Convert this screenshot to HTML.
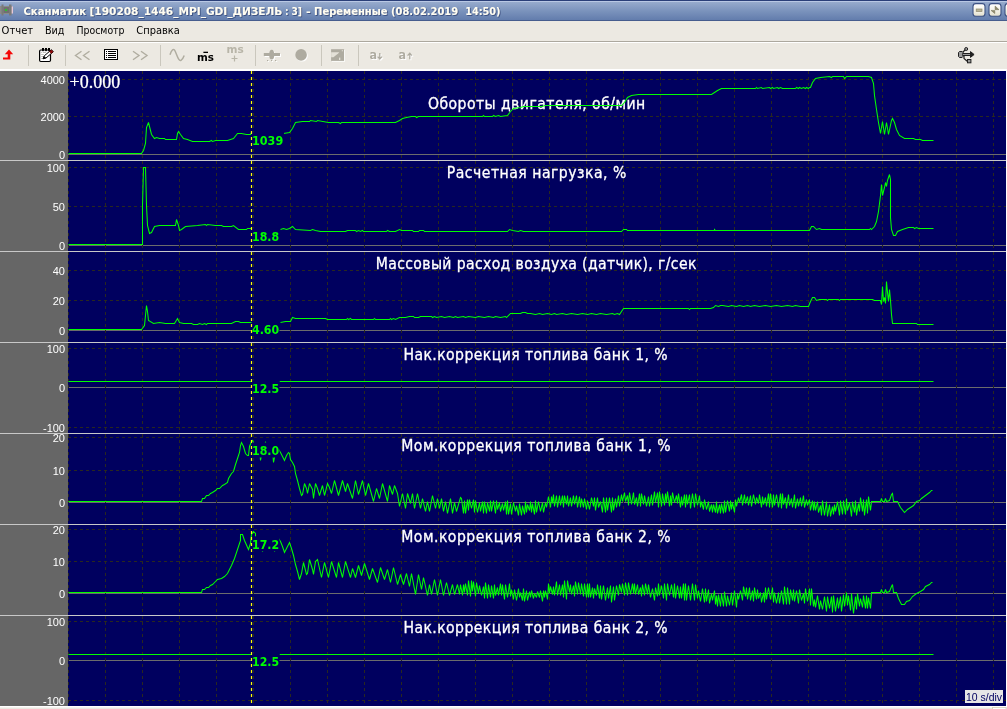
<!DOCTYPE html>
<html lang="ru"><head><meta charset="utf-8"><title>Сканматик</title>
<style>html,body{margin:0;padding:0;background:#ece9e2;overflow:hidden}body{width:1007px;height:709px;position:relative}svg text{white-space:pre}</style></head>
<body>
<svg width="1007" height="709" viewBox="0 0 1007 709" style="position:absolute;left:0;top:0;will-change:transform">
<defs><linearGradient id="tb" x1="0" y1="0" x2="0" y2="1"><stop offset="0" stop-color="#9db0d0"/><stop offset="0.5" stop-color="#7c94bd"/><stop offset="1" stop-color="#607aab"/></linearGradient></defs>
<rect x="0" y="71" width="68" height="635" fill="#666666"/>
<rect x="68" y="71" width="938" height="635" fill="#00005f"/>
<g stroke="#6c6c6c" stroke-width="1" shape-rendering="crispEdges">
<line x1="68" y1="154.5" x2="1006" y2="154.5"/>
<line x1="68" y1="245.5" x2="1006" y2="245.5"/>
<line x1="68" y1="330.5" x2="1006" y2="330.5"/>
<line x1="68" y1="387.5" x2="1006" y2="387.5"/>
<line x1="68" y1="502.5" x2="1006" y2="502.5"/>
<line x1="68" y1="593.5" x2="1006" y2="593.5"/>
<line x1="68" y1="660.5" x2="1006" y2="660.5"/>
</g>
<g stroke="#29281f" stroke-width="1" stroke-dasharray="3 3" shape-rendering="crispEdges">
<path d="M68.5 71V160M105.5 71V160M142.5 71V160M179.5 71V160M216.5 71V160M253.5 71V160M290.5 71V160M327.5 71V160M364.5 71V160M401.5 71V160M438.5 71V160M475.5 71V160M512.5 71V160M549.5 71V160M586.5 71V160M623.5 71V160M660.5 71V160M697.5 71V160M734.5 71V160M771.5 71V160M808.5 71V160M845.5 71V160M882.5 71V160M919.5 71V160M956.5 71V160M993.5 71V160" fill="none"/>
<path d="M68.5 161V251M105.5 161V251M142.5 161V251M179.5 161V251M216.5 161V251M253.5 161V251M290.5 161V251M327.5 161V251M364.5 161V251M401.5 161V251M438.5 161V251M475.5 161V251M512.5 161V251M549.5 161V251M586.5 161V251M623.5 161V251M660.5 161V251M697.5 161V251M734.5 161V251M771.5 161V251M808.5 161V251M845.5 161V251M882.5 161V251M919.5 161V251M956.5 161V251M993.5 161V251" fill="none"/>
<path d="M68.5 252V342M105.5 252V342M142.5 252V342M179.5 252V342M216.5 252V342M253.5 252V342M290.5 252V342M327.5 252V342M364.5 252V342M401.5 252V342M438.5 252V342M475.5 252V342M512.5 252V342M549.5 252V342M586.5 252V342M623.5 252V342M660.5 252V342M697.5 252V342M734.5 252V342M771.5 252V342M808.5 252V342M845.5 252V342M882.5 252V342M919.5 252V342M956.5 252V342M993.5 252V342" fill="none"/>
<path d="M68.5 343V433M105.5 343V433M142.5 343V433M179.5 343V433M216.5 343V433M253.5 343V433M290.5 343V433M327.5 343V433M364.5 343V433M401.5 343V433M438.5 343V433M475.5 343V433M512.5 343V433M549.5 343V433M586.5 343V433M623.5 343V433M660.5 343V433M697.5 343V433M734.5 343V433M771.5 343V433M808.5 343V433M845.5 343V433M882.5 343V433M919.5 343V433M956.5 343V433M993.5 343V433" fill="none"/>
<path d="M68.5 434V524M105.5 434V524M142.5 434V524M179.5 434V524M216.5 434V524M253.5 434V524M290.5 434V524M327.5 434V524M364.5 434V524M401.5 434V524M438.5 434V524M475.5 434V524M512.5 434V524M549.5 434V524M586.5 434V524M623.5 434V524M660.5 434V524M697.5 434V524M734.5 434V524M771.5 434V524M808.5 434V524M845.5 434V524M882.5 434V524M919.5 434V524M956.5 434V524M993.5 434V524" fill="none"/>
<path d="M68.5 525V615M105.5 525V615M142.5 525V615M179.5 525V615M216.5 525V615M253.5 525V615M290.5 525V615M327.5 525V615M364.5 525V615M401.5 525V615M438.5 525V615M475.5 525V615M512.5 525V615M549.5 525V615M586.5 525V615M623.5 525V615M660.5 525V615M697.5 525V615M734.5 525V615M771.5 525V615M808.5 525V615M845.5 525V615M882.5 525V615M919.5 525V615M956.5 525V615M993.5 525V615" fill="none"/>
<path d="M68.5 616V706M105.5 616V706M142.5 616V706M179.5 616V706M216.5 616V706M253.5 616V706M290.5 616V706M327.5 616V706M364.5 616V706M401.5 616V706M438.5 616V706M475.5 616V706M512.5 616V706M549.5 616V706M586.5 616V706M623.5 616V706M660.5 616V706M697.5 616V706M734.5 616V706M771.5 616V706M808.5 616V706M845.5 616V706M882.5 616V706M919.5 616V706M956.5 616V706M993.5 616V706" fill="none"/>
<line x1="68" y1="79.5" x2="1006" y2="79.5"/>
<line x1="68" y1="116.5" x2="1006" y2="116.5"/>
<line x1="68" y1="167.5" x2="1006" y2="167.5"/>
<line x1="68" y1="206.5" x2="1006" y2="206.5"/>
<line x1="68" y1="270.5" x2="1006" y2="270.5"/>
<line x1="68" y1="300.5" x2="1006" y2="300.5"/>
<line x1="68" y1="348.5" x2="1006" y2="348.5"/>
<line x1="68" y1="427.5" x2="1006" y2="427.5"/>
<line x1="68" y1="437.5" x2="1006" y2="437.5"/>
<line x1="68" y1="470.5" x2="1006" y2="470.5"/>
<line x1="68" y1="529.5" x2="1006" y2="529.5"/>
<line x1="68" y1="561.5" x2="1006" y2="561.5"/>
<line x1="68" y1="621.5" x2="1006" y2="621.5"/>
<line x1="68" y1="700.5" x2="1006" y2="700.5"/>
</g>
<g font-family="'DejaVu Sans Condensed','DejaVu Sans','Liberation Sans',sans-serif" font-size="15.6" fill="#ffffff" stroke="#ffffff" stroke-width="0.3">
<text x="427.9" y="108.7" textLength="217.3" lengthAdjust="spacing">Обороты двигателя, об/мин</text>
<text x="446.8" y="177.9" textLength="179.5" lengthAdjust="spacing">Расчетная нагрузка, %</text>
<text x="375.7" y="268.9" textLength="320.7" lengthAdjust="spacing">Массовый расход воздуха (датчик), г/сек</text>
<text x="403.4" y="360" textLength="264.2" lengthAdjust="spacing">Нак.коррекция топлива банк 1, %</text>
<text x="401.3" y="450.9" textLength="269.3" lengthAdjust="spacing">Мом.коррекция топлива банк 1, %</text>
<text x="401.3" y="541.9" textLength="269.3" lengthAdjust="spacing">Мом.коррекция топлива банк 2, %</text>
<text x="403.4" y="632.9" textLength="264.2" lengthAdjust="spacing">Нак.коррекция топлива банк 2, %</text>
</g>
<g fill="none" stroke="#00ff00" stroke-width="1.05" stroke-linejoin="miter" stroke-miterlimit="3">
<polyline points="68.5,153.5 141.5,153.5 143.5,150.5 145.5,143.5 146.5,127.5 148.5,122.5 149.5,126.5 151.5,134.5 154.5,138.5 156.5,137.5 159.5,138.5 164.5,138.5 165.5,139.5 171.5,139.5 176.5,139.5 177.5,133.5 178.5,131.5 180.5,134.5 183.5,138.5 187.5,139.5 192.5,141.5 209.5,141.5 211.5,140.5 212.5,141.5 215.5,140.5 227.5,140.5 233.5,138.5 237.5,133.5 241.5,133.5 246.5,134.5 250.5,134.5 251.5,132.5"/><polyline points="283.5,133.5 289.5,132.5 292.5,128.5 295.5,122.5 302.5,121.5 309.5,121.5 310.5,120.5 316.5,121.5 317.5,120.5 328.5,122.5 330.5,122.5 338.5,122.5 340.5,123.5 341.5,122.5 395.5,122.5 399.5,120.5 402.5,118.5 406.5,117.5 411.5,116.5 415.5,116.5 416.5,117.5 418.5,116.5 482.5,116.5 483.5,115.5 484.5,116.5 492.5,116.5 493.5,115.5 495.5,116.5 498.5,115.5 500.5,116.5 507.5,115.5 510.5,111.5 513.5,108.5 520.5,107.5 523.5,106.5 541.5,106.5 545.5,105.5 621.5,105.5 624.5,102.5 627.5,97.5 631.5,95.5 638.5,94.5 640.5,94.5 711.5,94.5 714.5,92.5 717.5,90.5 721.5,88.5 730.5,88.5 755.5,88.5 756.5,87.5 757.5,88.5 761.5,87.5 762.5,88.5 769.5,87.5 770.5,88.5 772.5,87.5 773.5,88.5 777.5,87.5 778.5,88.5 780.5,87.5 782.5,88.5 795.5,88.5 796.5,87.5 798.5,88.5 799.5,87.5 801.5,88.5 803.5,87.5 805.5,88.5 806.5,87.5 808.5,88.5 809.5,87.5 810.5,87.5 812.5,82.5 815.5,78.5 820.5,77.5 829.5,76.5 831.5,77.5 832.5,76.5 843.5,76.5 844.5,78.5 846.5,76.5 868.5,76.5 871.5,77.5 873.5,83.5 874.5,95.5 876.5,109.5 878.5,122.5 880.5,133.5 882.5,121.5 884.5,134.5 886.5,122.5 888.5,134.5 891.5,120.5 892.5,118.5 894.5,122.5 896.5,129.5 899.5,135.5 904.5,138.5 913.5,138.5 915.5,139.5 920.5,139.5 922.5,140.5 933.5,140.5"/>
<polyline points="68.5,244.5 142.5,244.5 142.5,205.5 143.5,167.5 145.5,167.5 146.5,205.5 147.5,225.5 149.5,233.5 151.5,232.5 154.5,226.5 159.5,225.5 175.5,225.5 176.5,219.5 178.5,225.5 179.5,230.5 181.5,229.5 185.5,226.5 197.5,225.5 205.5,224.5 206.5,225.5 207.5,224.5 215.5,225.5 221.5,225.5 223.5,226.5 231.5,226.5 233.5,225.5 238.5,229.5 246.5,229.5 247.5,228.5 251.5,228.5"/><polyline points="280.5,229.5 283.5,228.5 286.5,229.5 289.5,228.5 292.5,226.5 295.5,229.5 310.5,230.5 312.5,229.5 315.5,230.5 320.5,231.5 345.5,231.5 347.5,230.5 355.5,230.5 356.5,231.5 358.5,230.5 360.5,231.5 362.5,230.5 363.5,231.5 386.5,231.5 387.5,230.5 389.5,231.5 395.5,231.5 399.5,229.5 401.5,230.5 404.5,230.5 412.5,230.5 413.5,231.5 418.5,231.5 419.5,230.5 423.5,230.5 424.5,231.5 507.5,231.5 509.5,229.5 512.5,230.5 518.5,231.5 520.5,230.5 523.5,231.5 621.5,231.5 623.5,229.5 626.5,229.5 627.5,230.5 714.5,230.5 714.5,229.5 715.5,230.5 809.5,230.5 811.5,226.5 813.5,226.5 816.5,229.5 819.5,228.5 821.5,229.5 869.5,229.5 870.5,228.5 871.5,229.5 874.5,226.5 876.5,221.5 878.5,211.5 880.5,195.5 881.5,184.5 882.5,195.5 884.5,187.5 885.5,182.5 886.5,186.5 887.5,180.5 889.5,174.5 890.5,179.5 890.5,217.5 891.5,229.5 893.5,235.5 895.5,235.5 897.5,231.5 902.5,229.5 908.5,227.5 913.5,227.5 914.5,228.5 916.5,227.5 918.5,228.5 933.5,228.5"/>
<polyline points="68.5,329.5 141.5,329.5 144.5,325.5 145.5,315.5 146.5,305.5 147.5,311.5 148.5,320.5 153.5,323.5 159.5,322.5 165.5,323.5 174.5,323.5 177.5,318.5 179.5,322.5 183.5,323.5 191.5,323.5 193.5,324.5 197.5,324.5 199.5,323.5 202.5,324.5 204.5,323.5 206.5,324.5 207.5,323.5 231.5,323.5 235.5,321.5 238.5,321.5 240.5,322.5 251.5,322.5"/><polyline points="280.5,322.5 285.5,321.5 290.5,321.5 292.5,317.5 295.5,318.5 325.5,318.5 327.5,319.5 330.5,319.5 346.5,319.5 347.5,318.5 348.5,319.5 350.5,318.5 351.5,319.5 373.5,319.5 374.5,318.5 375.5,319.5 389.5,319.5 390.5,318.5 391.5,319.5 393.5,318.5 395.5,319.5 399.5,317.5 405.5,317.5 409.5,316.5 413.5,316.5 414.5,317.5 418.5,317.5 420.5,316.5 431.5,316.5 432.5,317.5 434.5,316.5 436.5,317.5 441.5,316.5 444.5,317.5 449.5,316.5 453.5,317.5 455.5,316.5 457.5,317.5 463.5,316.5 465.5,317.5 468.5,316.5 475.5,317.5 478.5,316.5 484.5,317.5 488.5,316.5 493.5,317.5 495.5,316.5 500.5,317.5 505.5,316.5 506.5,317.5 510.5,313.5 520.5,313.5 522.5,312.5 525.5,312.5 527.5,313.5 530.5,313.5 535.5,314.5 539.5,313.5 542.5,314.5 547.5,313.5 551.5,314.5 554.5,313.5 556.5,314.5 562.5,313.5 566.5,314.5 571.5,313.5 577.5,314.5 582.5,313.5 587.5,314.5 591.5,313.5 596.5,314.5 600.5,313.5 606.5,314.5 612.5,313.5 614.5,314.5 617.5,313.5 619.5,314.5 623.5,308.5 688.5,308.5 689.5,309.5 690.5,308.5 710.5,308.5 713.5,307.5 715.5,305.5 718.5,306.5 720.5,305.5 722.5,305.5 728.5,306.5 731.5,305.5 736.5,306.5 739.5,305.5 743.5,306.5 747.5,305.5 750.5,306.5 754.5,305.5 759.5,306.5 765.5,305.5 770.5,306.5 776.5,305.5 781.5,306.5 787.5,305.5 792.5,306.5 795.5,305.5 800.5,306.5 808.5,306.5 810.5,301.5 812.5,297.5 814.5,297.5 816.5,300.5 819.5,299.5 826.5,299.5 827.5,300.5 828.5,299.5 838.5,299.5 839.5,300.5 840.5,299.5 872.5,299.5 874.5,300.5 880.5,300.5 881.5,304.5 882.5,286.5 883.5,301.5 884.5,297.5 885.5,303.5 886.5,281.5 887.5,292.5 888.5,301.5 889.5,289.5 890.5,300.5 891.5,314.5 892.5,323.5 916.5,323.5 917.5,324.5 933.5,324.5"/>
<polyline points="68.5,381.5 252.5,381.5"/><polyline points="279.5,381.5 933.5,381.5"/>
<polyline points="68.5,501.5 201.5,501.5 202.5,498.5 204.5,498.5 206.5,495.5 208.5,495.5 210.5,493.5 212.5,492.5 215.5,490.5 217.5,488.5 219.5,488.5 222.5,485.5 224.5,484.5 227.5,482.5 228.5,478.5 231.5,473.5 233.5,471.5 235.5,464.5 237.5,458.5 239.5,452.5 240.5,445.5 241.5,442.5 243.5,446.5 245.5,453.5 247.5,455.5 248.5,455.5 249.5,446.5 251.5,441.5 252.5,440.5 253.5,442.5 255.5,449.5 257.5,455.5 259.5,447.5 260.5,460.5 262.5,449.5 265.5,442.5 268.5,450.5 270.5,456.5 272.5,449.5 273.5,462.5 275.5,452.5 277.5,447.5 280.5,452.5 282.5,456.5 284.5,460.5 286.5,455.5 288.5,452.5 289.5,453.5 290.5,459.5 292.5,462.5 294.5,466.5 295.5,473.5 297.5,480.5 299.5,488.5 301.5,495.5 302.5,494.5 304.5,483.5 306.5,488.5 307.5,493.5 309.5,483.5 312.5,489.5 313.5,498.5 315.5,483.5 317.5,488.5 319.5,495.5 322.5,485.5 324.5,495.5 327.5,483.5 329.5,487.5 331.5,493.5 334.5,480.5 338.5,495.5 342.5,480.5 345.5,491.5 347.5,483.5 352.5,498.5 355.5,480.5 358.5,494.5 362.5,480.5 365.5,495.5 368.5,483.5 373.5,501.5 376.5,488.5 379.5,498.5 382.5,483.5 387.5,501.5 389.5,485.5 392.5,494.5 394.5,485.5 397.5,493.5 399.5,506.5 402.5,493.5 405.5,508.5 407.5,493.5 410.5,503.5 412.5,493.5 414.5,508.5 417.5,493.5 420.5,508.5 422.5,498.5 425.5,511.5 427.5,501.5 429.5,511.5 432.5,495.5 435.5,508.5 437.5,498.5 439.5,508.5 441.5,498.5 443.5,511.5 445.5,501.5 447.5,513.5 450.5,498.5 452.5,513.5 454.5,502.5 456.5,511.5 460.5,497.5 461.5,498.5 463.5,513.5 464.5,500.5 465.5,513.5 467.5,499.5 468.5,510.5 469.5,499.5 471.5,508.5 473.5,499.5 474.5,512.5 475.5,500.5 477.5,512.5 479.5,502.5 480.5,511.5 482.5,501.5 483.5,513.5 484.5,501.5 486.5,513.5 487.5,502.5 489.5,511.5 490.5,500.5 491.5,511.5 493.5,500.5 495.5,513.5 496.5,500.5 497.5,509.5 499.5,502.5 500.5,511.5 502.5,503.5 503.5,510.5 505.5,501.5 506.5,514.5 507.5,500.5 508.5,514.5 510.5,503.5 511.5,514.5 513.5,502.5 515.5,511.5 516.5,505.5 518.5,515.5 519.5,503.5 521.5,515.5 522.5,505.5 524.5,514.5 525.5,501.5 526.5,512.5 527.5,504.5 529.5,510.5 530.5,501.5 531.5,512.5 532.5,503.5 534.5,514.5 535.5,500.5 536.5,512.5 538.5,501.5 540.5,511.5 542.5,502.5 543.5,512.5 545.5,502.5 546.5,507.5 548.5,496.5 550.5,507.5 551.5,496.5 552.5,503.5 553.5,494.5 554.5,506.5 556.5,495.5 557.5,507.5 559.5,495.5 560.5,505.5 562.5,495.5 563.5,507.5 564.5,495.5 566.5,504.5 567.5,495.5 568.5,506.5 570.5,497.5 571.5,506.5 573.5,495.5 574.5,504.5 576.5,495.5 577.5,507.5 579.5,496.5 580.5,507.5 581.5,498.5 583.5,507.5 584.5,498.5 586.5,509.5 587.5,500.5 589.5,509.5 591.5,497.5 593.5,506.5 594.5,497.5 595.5,510.5 597.5,497.5 598.5,507.5 600.5,501.5 602.5,512.5 603.5,497.5 605.5,512.5 606.5,497.5 607.5,510.5 609.5,497.5 611.5,512.5 612.5,497.5 613.5,510.5 615.5,498.5 616.5,507.5 618.5,495.5 619.5,506.5 621.5,494.5 622.5,501.5 624.5,492.5 625.5,501.5 627.5,495.5 628.5,505.5 629.5,492.5 631.5,504.5 633.5,492.5 634.5,504.5 636.5,497.5 637.5,506.5 639.5,493.5 640.5,506.5 641.5,493.5 643.5,504.5 644.5,495.5 646.5,506.5 648.5,496.5 649.5,506.5 651.5,494.5 652.5,505.5 654.5,491.5 655.5,502.5 657.5,492.5 658.5,507.5 659.5,491.5 661.5,506.5 662.5,493.5 664.5,505.5 665.5,493.5 666.5,502.5 667.5,491.5 669.5,506.5 670.5,495.5 671.5,505.5 672.5,492.5 674.5,502.5 676.5,495.5 677.5,503.5 678.5,493.5 680.5,507.5 681.5,496.5 682.5,505.5 684.5,494.5 685.5,507.5 686.5,494.5 687.5,504.5 689.5,494.5 690.5,508.5 692.5,493.5 694.5,507.5 695.5,493.5 697.5,505.5 699.5,495.5 700.5,507.5 701.5,501.5 703.5,509.5 704.5,499.5 706.5,509.5 708.5,501.5 709.5,511.5 711.5,504.5 712.5,512.5 713.5,504.5 715.5,512.5 716.5,501.5 717.5,513.5 719.5,504.5 720.5,513.5 721.5,503.5 723.5,513.5 724.5,500.5 725.5,512.5 727.5,500.5 729.5,511.5 730.5,500.5 731.5,509.5 732.5,502.5 734.5,512.5 735.5,499.5 736.5,506.5 738.5,497.5 739.5,502.5 741.5,494.5 742.5,505.5 744.5,494.5 745.5,503.5 747.5,496.5 748.5,505.5 750.5,495.5 751.5,506.5 753.5,494.5 755.5,504.5 756.5,497.5 758.5,503.5 759.5,494.5 761.5,507.5 762.5,496.5 763.5,504.5 765.5,497.5 766.5,506.5 768.5,493.5 769.5,507.5 770.5,493.5 772.5,507.5 773.5,494.5 774.5,505.5 776.5,494.5 778.5,507.5 780.5,493.5 781.5,508.5 782.5,493.5 783.5,504.5 785.5,497.5 786.5,508.5 788.5,494.5 789.5,505.5 791.5,498.5 792.5,507.5 794.5,494.5 795.5,508.5 797.5,498.5 798.5,506.5 800.5,497.5 801.5,506.5 803.5,495.5 804.5,507.5 806.5,499.5 807.5,505.5 809.5,499.5 810.5,510.5 812.5,500.5 813.5,510.5 814.5,501.5 815.5,510.5 817.5,501.5 818.5,512.5 820.5,505.5 821.5,515.5 822.5,500.5 824.5,515.5 826.5,501.5 827.5,516.5 829.5,504.5 830.5,516.5 832.5,506.5 833.5,514.5 834.5,504.5 835.5,511.5 837.5,501.5 839.5,515.5 840.5,500.5 842.5,514.5 843.5,500.5 845.5,514.5 846.5,498.5 847.5,510.5 849.5,502.5 851.5,516.5 852.5,501.5 854.5,512.5 855.5,500.5 856.5,515.5 858.5,503.5 859.5,511.5 860.5,497.5 862.5,511.5 863.5,499.5 864.5,515.5 866.5,499.5 867.5,513.5 868.5,496.5 870.5,510.5 871.5,501.5 880.5,501.5 881.5,498.5 882.5,501.5 884.5,501.5 885.5,498.5 886.5,501.5 889.5,500.5 891.5,494.5 892.5,493.5 893.5,501.5 897.5,501.5 900.5,507.5 904.5,512.5 907.5,509.5 913.5,505.5 916.5,501.5 919.5,500.5 921.5,498.5 925.5,495.5 929.5,492.5 931.5,490.5 932.5,490.5"/>
<polyline points="68.5,592.5 201.5,592.5 202.5,589.5 204.5,589.5 206.5,587.5 208.5,587.5 210.5,585.5 212.5,584.5 215.5,581.5 217.5,579.5 221.5,578.5 224.5,576.5 227.5,573.5 231.5,565.5 234.5,558.5 237.5,549.5 240.5,540.5 240.5,534.5 242.5,534.5 244.5,540.5 248.5,549.5 250.5,543.5 251.5,534.5 253.5,531.5 255.5,533.5 255.5,536.5 257.5,545.5 259.5,540.5 262.5,551.5 264.5,543.5 267.5,538.5 270.5,546.5 272.5,541.5 274.5,551.5 276.5,544.5 278.5,538.5 280.5,541.5 282.5,546.5 284.5,552.5 287.5,546.5 289.5,542.5 291.5,548.5 293.5,555.5 295.5,564.5 297.5,571.5 299.5,579.5 301.5,573.5 303.5,562.5 306.5,574.5 307.5,573.5 309.5,559.5 312.5,569.5 313.5,574.5 315.5,561.5 317.5,559.5 319.5,568.5 321.5,577.5 324.5,562.5 328.5,577.5 331.5,561.5 336.5,577.5 338.5,562.5 342.5,577.5 345.5,561.5 350.5,577.5 352.5,568.5 355.5,577.5 358.5,565.5 361.5,575.5 364.5,563.5 369.5,579.5 372.5,568.5 377.5,582.5 380.5,567.5 384.5,579.5 387.5,569.5 390.5,582.5 393.5,567.5 397.5,584.5 400.5,574.5 403.5,584.5 406.5,573.5 409.5,586.5 411.5,573.5 415.5,594.5 418.5,574.5 421.5,589.5 423.5,577.5 427.5,595.5 429.5,584.5 431.5,594.5 434.5,579.5 437.5,595.5 440.5,579.5 443.5,595.5 446.5,582.5 449.5,595.5 452.5,584.5 454.5,594.5 457.5,584.5 459.5,594.5 460.5,584.5 462.5,595.5 463.5,584.5 464.5,592.5 465.5,583.5 467.5,595.5 468.5,580.5 470.5,596.5 471.5,580.5 472.5,591.5 473.5,581.5 475.5,596.5 476.5,582.5 478.5,593.5 479.5,585.5 481.5,595.5 483.5,586.5 484.5,598.5 485.5,582.5 487.5,598.5 488.5,584.5 490.5,597.5 491.5,585.5 493.5,598.5 494.5,584.5 495.5,595.5 497.5,587.5 498.5,595.5 500.5,583.5 501.5,595.5 502.5,584.5 504.5,599.5 505.5,584.5 507.5,597.5 509.5,583.5 510.5,596.5 511.5,589.5 513.5,599.5 514.5,589.5 516.5,600.5 518.5,588.5 519.5,597.5 520.5,592.5 522.5,600.5 523.5,588.5 524.5,601.5 526.5,590.5 527.5,600.5 529.5,591.5 530.5,597.5 531.5,590.5 533.5,598.5 534.5,593.5 536.5,597.5 537.5,591.5 539.5,597.5 540.5,590.5 542.5,601.5 543.5,590.5 544.5,597.5 545.5,590.5 547.5,599.5 548.5,583.5 549.5,593.5 550.5,586.5 552.5,594.5 553.5,586.5 554.5,595.5 556.5,581.5 557.5,595.5 559.5,584.5 560.5,595.5 562.5,584.5 563.5,597.5 564.5,580.5 566.5,599.5 567.5,580.5 569.5,592.5 570.5,584.5 571.5,594.5 573.5,585.5 574.5,596.5 575.5,581.5 577.5,594.5 578.5,582.5 580.5,594.5 581.5,583.5 583.5,596.5 584.5,583.5 586.5,597.5 587.5,583.5 588.5,597.5 589.5,583.5 590.5,597.5 592.5,587.5 593.5,598.5 594.5,588.5 596.5,595.5 597.5,584.5 599.5,598.5 600.5,585.5 601.5,599.5 603.5,585.5 605.5,600.5 607.5,587.5 608.5,598.5 610.5,585.5 611.5,602.5 613.5,586.5 614.5,600.5 616.5,585.5 618.5,595.5 619.5,584.5 621.5,592.5 622.5,583.5 624.5,595.5 625.5,582.5 627.5,595.5 628.5,582.5 630.5,594.5 632.5,583.5 633.5,593.5 634.5,583.5 635.5,594.5 637.5,584.5 638.5,594.5 640.5,587.5 641.5,596.5 642.5,584.5 644.5,595.5 645.5,583.5 647.5,594.5 648.5,584.5 650.5,597.5 652.5,588.5 654.5,600.5 655.5,587.5 657.5,596.5 658.5,583.5 659.5,595.5 661.5,585.5 663.5,598.5 664.5,583.5 666.5,600.5 667.5,583.5 669.5,595.5 671.5,584.5 673.5,597.5 674.5,583.5 675.5,598.5 677.5,585.5 679.5,598.5 680.5,586.5 681.5,598.5 683.5,583.5 684.5,600.5 685.5,583.5 686.5,600.5 688.5,585.5 690.5,600.5 692.5,583.5 694.5,600.5 695.5,584.5 697.5,598.5 698.5,590.5 700.5,601.5 702.5,588.5 704.5,602.5 705.5,588.5 706.5,601.5 708.5,589.5 709.5,603.5 711.5,593.5 712.5,600.5 714.5,590.5 715.5,604.5 716.5,595.5 717.5,606.5 718.5,594.5 720.5,606.5 721.5,593.5 723.5,606.5 724.5,591.5 726.5,606.5 727.5,595.5 729.5,605.5 731.5,592.5 732.5,605.5 734.5,590.5 736.5,607.5 737.5,593.5 738.5,599.5 740.5,590.5 742.5,600.5 743.5,586.5 745.5,596.5 746.5,587.5 747.5,599.5 749.5,587.5 750.5,600.5 752.5,590.5 753.5,601.5 754.5,587.5 756.5,599.5 757.5,589.5 758.5,598.5 760.5,592.5 761.5,602.5 763.5,592.5 764.5,602.5 765.5,587.5 766.5,599.5 768.5,587.5 770.5,599.5 772.5,587.5 773.5,602.5 774.5,592.5 776.5,603.5 778.5,592.5 779.5,603.5 781.5,590.5 783.5,604.5 784.5,586.5 786.5,604.5 787.5,587.5 789.5,604.5 790.5,589.5 792.5,600.5 793.5,589.5 794.5,601.5 796.5,590.5 798.5,603.5 799.5,589.5 801.5,600.5 803.5,593.5 804.5,603.5 805.5,588.5 807.5,601.5 809.5,588.5 810.5,605.5 811.5,588.5 813.5,606.5 814.5,599.5 815.5,607.5 817.5,595.5 819.5,609.5 820.5,600.5 822.5,609.5 824.5,596.5 826.5,611.5 827.5,596.5 829.5,608.5 831.5,596.5 832.5,612.5 833.5,595.5 835.5,611.5 837.5,597.5 838.5,608.5 840.5,596.5 841.5,611.5 843.5,594.5 844.5,606.5 846.5,592.5 847.5,605.5 848.5,595.5 850.5,610.5 851.5,593.5 853.5,613.5 855.5,596.5 856.5,609.5 857.5,593.5 859.5,606.5 860.5,598.5 862.5,607.5 863.5,595.5 865.5,608.5 866.5,595.5 867.5,608.5 868.5,597.5 870.5,608.5 871.5,592.5 880.5,592.5 881.5,589.5 882.5,592.5 884.5,592.5 885.5,589.5 886.5,592.5 889.5,591.5 891.5,586.5 892.5,584.5 893.5,592.5 896.5,592.5 898.5,598.5 901.5,604.5 904.5,604.5 906.5,601.5 909.5,600.5 912.5,596.5 916.5,593.5 920.5,591.5 923.5,589.5 925.5,586.5 929.5,584.5 931.5,582.5 932.5,582.5"/>
<polyline points="68.5,654.5 252.5,654.5"/><polyline points="279.5,654.5 933.5,654.5"/>
</g>
<rect x="252" y="132.5" width="32" height="15" fill="#00005f"/>
<rect x="252" y="228.5" width="27.5" height="15" fill="#00005f"/>
<rect x="252" y="321.0" width="27.5" height="15" fill="#00005f"/>
<rect x="252" y="380.5" width="27.5" height="15" fill="#00005f"/>
<rect x="252" y="442.5" width="27.5" height="15" fill="#00005f"/>
<rect x="252" y="536.3" width="27.5" height="15" fill="#00005f"/>
<rect x="252" y="653.5" width="27.5" height="15" fill="#00005f"/>
<path d="M251.5 71V160M251.5 161V251M251.5 252V342M251.5 343V433M251.5 434V524M251.5 525V615M251.5 616V706" fill="none" stroke="#ffff00" stroke-width="1.2" stroke-dasharray="3 3"/>
<g stroke="#c8c8c8" stroke-width="1" shape-rendering="crispEdges">
<line x1="0" y1="160.5" x2="1006" y2="160.5"/>
<line x1="0" y1="251.5" x2="1006" y2="251.5"/>
<line x1="0" y1="342.5" x2="1006" y2="342.5"/>
<line x1="0" y1="433.5" x2="1006" y2="433.5"/>
<line x1="0" y1="524.5" x2="1006" y2="524.5"/>
<line x1="0" y1="615.5" x2="1006" y2="615.5"/>
</g>
<g font-family="'DejaVu Sans Condensed','DejaVu Sans','Liberation Sans',sans-serif" font-weight="bold" font-size="12.4" fill="#00ff00">
<text x="252" y="145" textLength="31.2" lengthAdjust="spacingAndGlyphs">1039</text>
<text x="252" y="241" textLength="27.2" lengthAdjust="spacingAndGlyphs">18.8</text>
<text x="252" y="333.5" textLength="27.2" lengthAdjust="spacingAndGlyphs">4.60</text>
<text x="252" y="393" textLength="27.2" lengthAdjust="spacingAndGlyphs">12.5</text>
<text x="252" y="455" textLength="27.2" lengthAdjust="spacingAndGlyphs">18.0</text>
<text x="252" y="548.8" textLength="27.2" lengthAdjust="spacingAndGlyphs">17.2</text>
<text x="252" y="666" textLength="27.2" lengthAdjust="spacingAndGlyphs">12.5</text>
</g>
<g font-family="'Liberation Sans',sans-serif" font-size="11" fill="#ffffff" text-anchor="end">
<text x="65" y="84.0">4000</text>
<text x="65" y="121.0">2000</text>
<text x="65" y="159.0">0</text>
<text x="65" y="172.0">100</text>
<text x="65" y="211.0">50</text>
<text x="65" y="250.0">0</text>
<text x="65" y="275.0">40</text>
<text x="65" y="305.0">20</text>
<text x="65" y="335.0">0</text>
<text x="65" y="353.0">100</text>
<text x="65" y="392.0">0</text>
<text x="65" y="432.0">-100</text>
<text x="65" y="442.0">20</text>
<text x="65" y="475.0">10</text>
<text x="65" y="507.0">0</text>
<text x="65" y="534.0">20</text>
<text x="65" y="566.0">10</text>
<text x="65" y="598.0">0</text>
<text x="65" y="626.0">100</text>
<text x="65" y="665.0">0</text>
<text x="65" y="705.0">-100</text>
</g>
<text x="69.5" y="88.2" font-family="'Liberation Serif',serif" font-size="18" fill="#ffffff" stroke="#ffffff" stroke-width="0.25">+0.000</text>
<rect x="965" y="690" width="38" height="13" fill="#e6e6e6"/>
<text x="966" y="700.5" font-family="'Liberation Sans',sans-serif" font-size="10.5" fill="#000060" textLength="36" lengthAdjust="spacingAndGlyphs">10 s/div</text>
<rect x="1006" y="71" width="1" height="635" fill="#ffffff"/>
<rect x="0" y="706" width="1007" height="3" fill="#ece9e2"/>
<rect x="0" y="706" width="1007" height="1" fill="#ffffff"/>
<rect x="0" y="707" width="1007" height="1" fill="#f6f4f0"/>
<rect x="992.5" y="707.5" width="13.5" height="2" fill="#ffffff" stroke="#d6d0b8" stroke-width="0.8"/>
<rect x="0" y="0" width="1007" height="21" fill="url(#tb)"/>
<rect x="0" y="0" width="1007" height="1" fill="#2a3f78"/>
<rect x="0" y="1" width="1007" height="1" fill="#b9c8e4"/>
<rect x="0" y="20" width="1007" height="1" fill="#465d8e"/>
<g><rect x="0" y="6" width="12" height="8" fill="#8a8a8a"/><rect x="1.5" y="4.5" width="2" height="11" fill="#7a7a7a"/><rect x="9" y="4.5" width="2.5" height="11" fill="#7a7a7a"/><rect x="3.5" y="7" width="5.5" height="6" fill="#707070"/><rect x="5" y="9" width="2" height="2" fill="#30c030"/><rect x="11.7" y="6.5" width="1.3" height="7" fill="#e8c8d8"/></g>
<g font-family="'DejaVu Sans Condensed','DejaVu Sans','Liberation Sans',sans-serif" font-weight="bold" font-size="11.25" style="white-space:pre">
<filter id="tsh" x="-2%" y="-30%" width="104%" height="170%"><feDropShadow dx="0.9" dy="0.9" stdDeviation="0.15" flood-color="#2b3d70" flood-opacity="0.8"/></filter>
<text y="14.9" fill="#fffdf2" filter="url(#tsh)"><tspan x="23.4" textLength="62.8" lengthAdjust="spacingAndGlyphs">Сканматик</tspan><tspan> </tspan><tspan x="89.5" textLength="192.9" lengthAdjust="spacingAndGlyphs">[190208_1446_MPI_GDI_ДИЗЕЛЬ</tspan><tspan> </tspan><tspan x="285.2" textLength="3.1" lengthAdjust="spacingAndGlyphs">:</tspan><tspan> </tspan><tspan x="291.6" textLength="10.4" lengthAdjust="spacingAndGlyphs">3]</tspan><tspan> </tspan><tspan x="306.0" textLength="4.7" lengthAdjust="spacingAndGlyphs">-</tspan><tspan> </tspan><tspan x="314.1" textLength="73.4" lengthAdjust="spacingAndGlyphs">Переменные</tspan><tspan> </tspan><tspan x="391.0" textLength="67.1" lengthAdjust="spacingAndGlyphs">(08.02.2019</tspan><tspan> &#160;</tspan><tspan x="465.3" textLength="35.2" lengthAdjust="spacingAndGlyphs">14:50)</tspan></text>
</g>
<defs><linearGradient id="cb" x1="0" y1="0" x2="0" y2="1"><stop offset="0" stop-color="#ffffff"/><stop offset="0.5" stop-color="#f6f4ea"/><stop offset="1" stop-color="#e2dfcc"/></linearGradient></defs>
<rect x="973" y="3.6" width="12" height="12.6" rx="2.8" ry="2.8" fill="url(#cb)" stroke="#3d5284" stroke-width="1.1"/>
<rect x="989" y="3.6" width="12" height="12.6" rx="2.8" ry="2.8" fill="url(#cb)" stroke="#3d5284" stroke-width="1.1"/>
<rect x="1005" y="3.6" width="12" height="12.6" rx="2.8" ry="2.8" fill="url(#cb)" stroke="#3d5284" stroke-width="1.1"/>
<rect x="976.2" y="11" width="6" height="1.2" fill="#ffffff"/><rect x="976.2" y="9" width="5.8" height="2.6" fill="#b9b497" stroke="#8d886c" stroke-width="0.7"/>
<path d="M995.1 6 V9.7 H999 Z M991 10.4 H994.8 V13.6 Z" fill="#8f8a6c" stroke="#736e54" stroke-width="0.5"/>
<rect x="0" y="21" width="1007" height="21" fill="#ece9e2"/>
<g font-family="'DejaVu Sans Condensed','DejaVu Sans','Liberation Sans',sans-serif" font-size="11" fill="#000000">
<text x="1.6" y="34" textLength="31.6" lengthAdjust="spacingAndGlyphs">Отчет</text>
<text x="44.9" y="34" textLength="19.5" lengthAdjust="spacingAndGlyphs">Вид</text>
<text x="76.5" y="34" textLength="48" lengthAdjust="spacingAndGlyphs">Просмотр</text>
<text x="136.3" y="34" textLength="43.5" lengthAdjust="spacingAndGlyphs">Справка</text>
</g>
<rect x="0" y="41" width="1007" height="1" fill="#aca89e"/>
<rect x="0" y="42" width="1007" height="1" fill="#ffffff"/>
<rect x="0" y="43" width="1007" height="26" fill="#ece9e2"/>
<rect x="0" y="69" width="1007" height="2" fill="#ffffff"/>
<rect x="28.0" y="45" width="1" height="21" fill="#cac7bd"/>
<rect x="65.0" y="45" width="1" height="21" fill="#cac7bd"/>
<rect x="160.0" y="45" width="1" height="21" fill="#cac7bd"/>
<rect x="255.0" y="45" width="1" height="21" fill="#cac7bd"/>
<rect x="321.0" y="45" width="1" height="21" fill="#cac7bd"/>
<rect x="358.0" y="45" width="1" height="21" fill="#cac7bd"/>
<path d="M9 49.6 L13.2 54.2 H10.3 V59.5 H3 V57.5 H7.7 V54.2 H4.8 Z" fill="#f40808"/>
<g><rect x="39.6" y="50" width="10.9" height="11.5" rx="1.2" fill="#ffffff" stroke="#000" stroke-width="1.2"/><path d="M42 48 h2 v2.6 l-1 0.8 l-1 -0.8 z M45 48 h2 v2.6 l-1 0.8 l-1 -0.8 z M48 48 h2 v2.6 l-1 0.8 l-1 -0.8 z" fill="#000"/><path d="M41.2 52.5 h1 M43 52.5 h3 M41.2 54.5 h2.5 M41.2 56.5 h2 M41.2 58.5 h2" stroke="#b8b8b0" stroke-width="0.9"/><path d="M43.2 58.7 L44.2 55.9 L51.5 49.7 L53.3 51.8 L46 58 Z" fill="#fff" stroke="#000" stroke-width="1" stroke-linejoin="round"/><path d="M43.1 58.8 L44 56.4 L45.7 58.1 Z" fill="#000" stroke="#000" stroke-width="0.6"/><path d="M49.2 51.6 L51.5 49.7 L53.3 51.8 L51 53.7 Z" fill="#8b0a0a"/></g>
<g fill="none" stroke="#b0ada0" stroke-width="1.4"><path d="M81.5 51.2 l-6 4.3 l6 4.3 M89.5 51.2 l-6 4.3 l6 4.3"/><path d="M133 51.2 l6 4.3 l-6 4.3 M141 51.2 l6 4.3 l-6 4.3"/></g>
<g shape-rendering="crispEdges"><rect x="104" y="49" width="14" height="11" fill="#000"/><rect x="105" y="50" width="12" height="9" fill="#fff"/><rect x="106" y="51" width="1" height="1" fill="#000"/><rect x="108" y="51" width="8" height="1" fill="#000"/><rect x="106" y="53" width="1" height="1" fill="#000"/><rect x="108" y="53" width="8" height="1" fill="#000"/><rect x="106" y="55" width="1" height="1" fill="#000"/><rect x="108" y="55" width="8" height="1" fill="#000"/><rect x="106" y="57" width="1" height="1" fill="#000"/><rect x="108" y="57" width="8" height="1" fill="#000"/></g>
<path d="M170 54.8 C171.5 49.5 173.6 47.8 175.3 51.5 C177.3 56 178.8 61.6 181 60.4 C182.6 59.5 183.5 57.5 184.2 55.6" fill="none" stroke="#b0ada0" stroke-width="1.5"/>
<text x="197" y="61.4" font-family="'DejaVu Sans','Liberation Sans',sans-serif" font-weight="bold" font-size="10.5" fill="#000" textLength="17" lengthAdjust="spacingAndGlyphs">ms</text>
<rect x="203.4" y="51.7" width="4.6" height="1.3" fill="#000"/>
<text x="226.5" y="53.2" font-family="'DejaVu Sans','Liberation Sans',sans-serif" font-weight="bold" font-size="10.5" fill="#b8b5a8" textLength="17.2" lengthAdjust="spacingAndGlyphs">ms</text>
<path d="M231.5 58.5 h6 M234.5 55.5 v6" stroke="#b8b5a8" stroke-width="1.2"/>
<g fill="#ffffff" transform="translate(1,1)"><rect x="263.8" y="53" width="16.2" height="3"/><ellipse cx="271.7" cy="54.7" rx="2.5" ry="4.9"/><rect x="267" y="60" width="1.2" height="1"/><rect x="271" y="60" width="1.2" height="1"/><rect x="275" y="60" width="1.2" height="1"/></g><g fill="#aeaba0"><rect x="263.8" y="53" width="16.2" height="3"/><ellipse cx="271.7" cy="54.7" rx="2.5" ry="4.9"/><rect x="267" y="60" width="1.2" height="1"/><rect x="271" y="60" width="1.2" height="1"/><rect x="275" y="60" width="1.2" height="1"/></g>
<circle cx="302" cy="55.8" r="5.8" fill="#ffffff"/><circle cx="301.1" cy="54.9" r="5.8" fill="#aeaba0"/>
<g><rect x="332" y="50" width="13" height="11.7" fill="#ffffff"/><rect x="331.1" y="49.2" width="13" height="11.7" fill="#aeaba0"/><path d="M331.1 52.3 H339.3 L338.4 53.2 L333.5 57.2 H331.1 Z" fill="#e4e1d8"/><rect x="339" y="57.6" width="1.3" height="2.4" fill="#e4e1d8"/><rect x="341.8" y="50.2" width="1.1" height="1.1" fill="#e4e1d8"/></g>
<filter id="emb" x="-10%" y="-20%" width="130%" height="150%"><feDropShadow dx="1" dy="1" stdDeviation="0" flood-color="#ffffff" flood-opacity="1"/></filter>
<g filter="url(#emb)"><g font-family="'DejaVu Sans Condensed','DejaVu Sans','Liberation Sans',sans-serif" font-weight="bold" font-size="12.5" fill="#aeaba0"><text x="369.4" y="58.8">a</text><text x="398.6" y="58.8">a</text></g><path d="M379.8 53 v6 M377.6 56.6 l2.2 2.4 l2.2 -2.4" fill="none" stroke="#aeaba0" stroke-width="1.3"/><path d="M409.8 59.2 v-6 M407.6 55.6 l2.2 -2.4 l2.2 2.4" fill="none" stroke="#aeaba0" stroke-width="1.3"/></g>
<g fill="#9a9a9a" stroke="#202020" stroke-width="1"><path d="M962.5 52.5 l3 -3 M964 56 v2.5 l3.2 2.8" fill="none" stroke-width="1.2"/><path d="M959.5 51.5 h2.6 l1 1 v4 l-1 1 h-2.6 l-1 -1 v-4 z"/><rect x="963" y="53.5" width="8.5" height="2"/><path d="M970.5 51.6 l3.6 2.9 l-3.6 2.9 z" fill="#202020"/><circle cx="966.2" cy="49" r="1.5"/><rect x="967.5" y="59.5" width="3.4" height="3.3"/></g>
</svg>
</body></html>
